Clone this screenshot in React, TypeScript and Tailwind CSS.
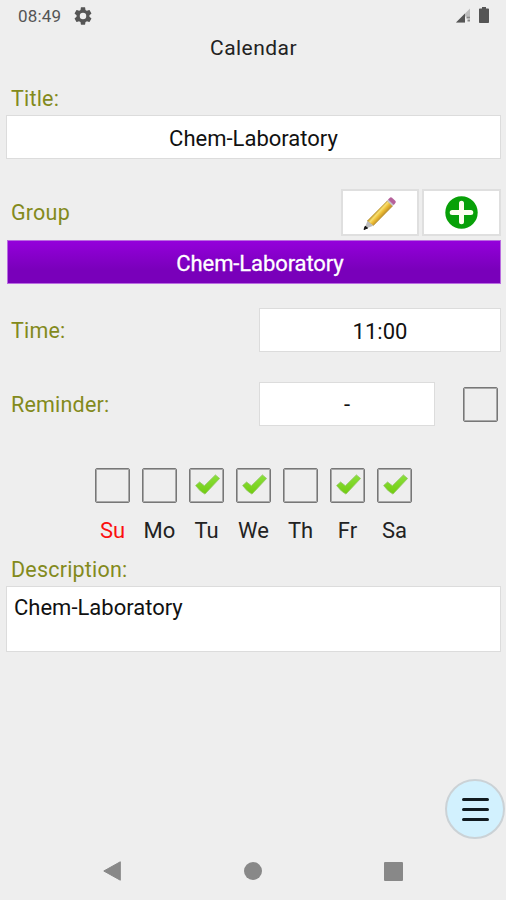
import React from "react";

const label = "text-[#838a1c] text-[21.5px] leading-[26px] tracking-[0.2px]";
const field = "flex items-center justify-center border border-[#dcdcdc] bg-white text-[22px] text-[#111]";

function Check() {
  return (
    <svg width="25" height="21" viewBox="0 0 24 20" className="mb-[2px] ml-[2px]">
      <defs>
        <linearGradient id="leaf" x1="0" y1="0" x2="0" y2="1">
          <stop offset="0" stopColor="#8ae03c" />
          <stop offset="1" stopColor="#72cc10" />
        </linearGradient>
      </defs>
      <path d="M0.6 11 4.4 7.6 9 11.2 19.6 0.8 23.6 4.2 9.6 19.2Q5.4 17.4 0.6 11Z" fill="url(#leaf)" stroke="#94c765" strokeWidth="0.8" strokeLinejoin="round" />
    </svg>
  );
}

function Box({ checked = false }: { checked?: boolean }) {
  return (
    <div className="flex h-[35px] w-[35px] shrink-0 items-center justify-center rounded-[2px] border border-[#777] shadow-[inset_0_0_0_1px_#a8a8a8]">
      {checked && <Check />}
    </div>
  );
}

function Pencil() {
  return (
    <svg width="34" height="34" viewBox="0 0 34 34">
      <defs>
        <linearGradient id="wood" gradientUnits="userSpaceOnUse" x1="14" y1="15" x2="20" y2="20.5">
          <stop offset="0" stopColor="#c9a02c" />
          <stop offset="0.25" stopColor="#f8e070" />
          <stop offset="0.55" stopColor="#edbd35" />
          <stop offset="1" stopColor="#b98a24" />
        </linearGradient>
      </defs>
      <path d="M4.2 25 24.4 4.8 29.6 10 10.4 29.6Z" fill="url(#wood)" stroke="#b5903c" strokeWidth="0.6" />
      <path d="M4.4 25 10.2 29.8 1.2 33.3Z" fill="#bcbcbc" />
      <path d="M2.2 30.2 4.6 32.1 1 33.5Z" fill="#111" stroke="#111" />
      <path d="M23.8 4.8 25.3 3.4 31 8.6 29.6 10.2Z" fill="#c6c3c8" />
      <path d="M25 3.6 27.2 1.6Q28 1 29 1.7L32.5 5Q33.2 6 32.4 7L30.8 8.9Z" fill="#b5619b" />
    </svg>
  );
}

const days: [string, boolean][] = [
  ["Su", false], ["Mo", false], ["Tu", true], ["We", true], ["Th", false], ["Fr", true], ["Sa", true],
];

export default function App() {
  return (
    <div className="relative flex h-[900px] w-[506px] flex-col overflow-hidden bg-[#eee] font-['Roboto',sans-serif]">
      <header className="flex h-8 shrink-0 items-center pl-[18px] pr-[17px] text-[#555]">
        <span className="text-[17px] leading-5 tracking-[0.2px]">08:49</span>
        <svg width="18" height="18" viewBox="2 2 20 20" className="ml-[13px] mb-px" fill="#555">
          <path d="M19.14 12.94c.04-.3.06-.61.06-.94s-.02-.64-.07-.94l2.03-1.58c.18-.14.23-.41.12-.61l-1.92-3.32c-.12-.22-.37-.29-.59-.22l-2.39.96c-.5-.38-1.03-.7-1.62-.94l-.36-2.54c-.04-.24-.24-.41-.48-.41h-3.84c-.24 0-.43.17-.47.41l-.36 2.54c-.59.24-1.13.57-1.62.94l-2.39-.96c-.22-.08-.47 0-.59.22L2.74 8.87c-.12.21-.08.47.12.61l2.03 1.58c-.05.3-.09.63-.09.94s.02.64.07.94l-2.03 1.58c-.18.14-.23.41-.12.61l1.92 3.32c.12.22.37.29.59.22l2.39-.96c.5.38 1.03.7 1.62.94l.36 2.54c.05.24.24.41.48.41h3.84c.24 0 .44-.17.47-.41l.36-2.54c.59-.24 1.13-.56 1.62-.94l2.39.96c.22.08.47 0 .59-.22l1.92-3.32c.12-.22.07-.47-.12-.61zM12 15.6A3.6 3.6 0 1 1 12 8.4a3.6 3.6 0 0 1 0 7.2z" />
        </svg>
        <svg width="15" height="15" viewBox="0 0 15 15" className="mb-px ml-auto">
          <path d="M0 14.5 14 0.5V8.5H9V14.5Z" fill="#bdbdbd" />
          <path d="M0 14.5 9 5.5V14.5Z" fill="#555" />
          <path d="M10.5 9.5h3.5M11.5 12.5h2.5" stroke="#888" strokeWidth="1.8" />
        </svg>
        <svg width="10" height="16" viewBox="0 0 10 16" className="mb-[2px] ml-[8px]">
          <path d="M3 0h4v1.5h2.2q.8 0 .8.8v12.9q0 .8-.8.8H.8Q0 16 0 15.2V2.3q0-.8.8-.8H3Z" fill="#555" />
        </svg>
      </header>
      <h1 className="h-8 shrink-0 pl-px text-center text-[21px] leading-8 tracking-[0.45px] text-[#222]">Calendar</h1>
      <main className="flex flex-col pl-[6px] pr-[5px]">
        <div className={`${label} mt-[22px] pl-[5px]`}>Title:</div>
        <div className={`${field} mt-[3px] h-[44px] pt-[2px]`}>Chem-Laboratory</div>
        <div className="mt-[30px] flex h-[47px] items-center">
          <span className={`${label} flex-1 pl-[5px] pt-px`}>Group</span>
          <button className="flex h-[47px] w-[78px] items-center justify-center border-2 border-[#dfdfdf] bg-white"><Pencil /></button>
          <button className="ml-[3px] flex h-[47px] w-[79px] items-center justify-center border-2 border-[#dfdfdf] bg-white">
            <svg width="33" height="33" viewBox="0 0 33 33">
              <circle cx="16.5" cy="16.5" r="16.2" fill="#08a008" />
              <path d="M16.5 7.2v18.6M7.2 16.5h18.6" stroke="#fffff0" strokeWidth="5" strokeLinecap="round" />
            </svg>
          </button>
        </div>
        <div className="ml-px mt-[4px] flex h-[44px] items-center justify-center border border-[#b96be0] bg-linear-to-b from-[#9400db] to-[#7900ba] to-70% pl-[12px] pt-[2px] text-[22px] tracking-[-0.1px] text-white [-webkit-text-stroke:0.3px_white]">Chem-Laboratory</div>
        <div className="mt-[24px] flex h-[44px] items-center">
          <span className={`${label} flex-1 pl-[5px] pt-[2px]`}>Time:</span>
          <div className={`${field} h-[44px] w-[242px] pt-[2px]`}>11:00</div>
        </div>
        <div className="mt-[30px] flex h-[44px] items-center">
          <span className={`${label} flex-1 pl-[5px] pt-[2px]`}>Reminder:</span>
          <div className={`${field} mr-[28px] h-[44px] w-[176px] pt-px`}>-</div>
          <div className="mr-[3px]"><Box /></div>
        </div>
        <div className="mt-[42px] flex h-[79px] justify-center">
          {days.map(([day, checked]) => (
            <div key={day} className="flex w-[47px] flex-col items-center">
              <Box checked={checked} />
              <span className={`mt-[15px] text-[22px] leading-[26px] ${day === "Su" ? "text-[#fb1010]" : "text-[#222]"}`}>{day}</span>
            </div>
          ))}
        </div>
        <div className={`${label} mt-[10px] pl-[5px]`}>Description:</div>
        <div className="mt-[3px] h-[66px] border border-[#dcdcdc] bg-white px-[7px] pt-[8px] text-[22px] leading-[26px] text-[#111]">Chem-Laboratory</div>
      </main>
      <button className="absolute left-[445px] top-[779px] flex h-[60px] w-[60px] flex-col items-center justify-center gap-[7px] rounded-full border-2 border-[#cbd2d6] bg-[#d2f1fe]">
        <span className="h-[3px] w-[27px] rounded-full bg-[#111b20]" />
        <span className="h-[3px] w-[27px] rounded-full bg-[#111b20]" />
        <span className="h-[3px] w-[27px] rounded-full bg-[#111b20]" />
      </button>
      <nav className="mt-auto flex h-[58px] shrink-0 items-center justify-between pl-[103px] pr-[103px]">
        <svg width="18" height="20" viewBox="0 0 18 20"><path d="M.8 10 17.3.8V19.2Z" fill="#888" stroke="#888" strokeLinejoin="round" /></svg>
        <div className="h-[18px] w-[18px] rounded-full bg-[#888]" />
        <div className="h-[19px] w-[19px] rounded-[1px] bg-[#888]" />
      </nav>
    </div>
  );
}
